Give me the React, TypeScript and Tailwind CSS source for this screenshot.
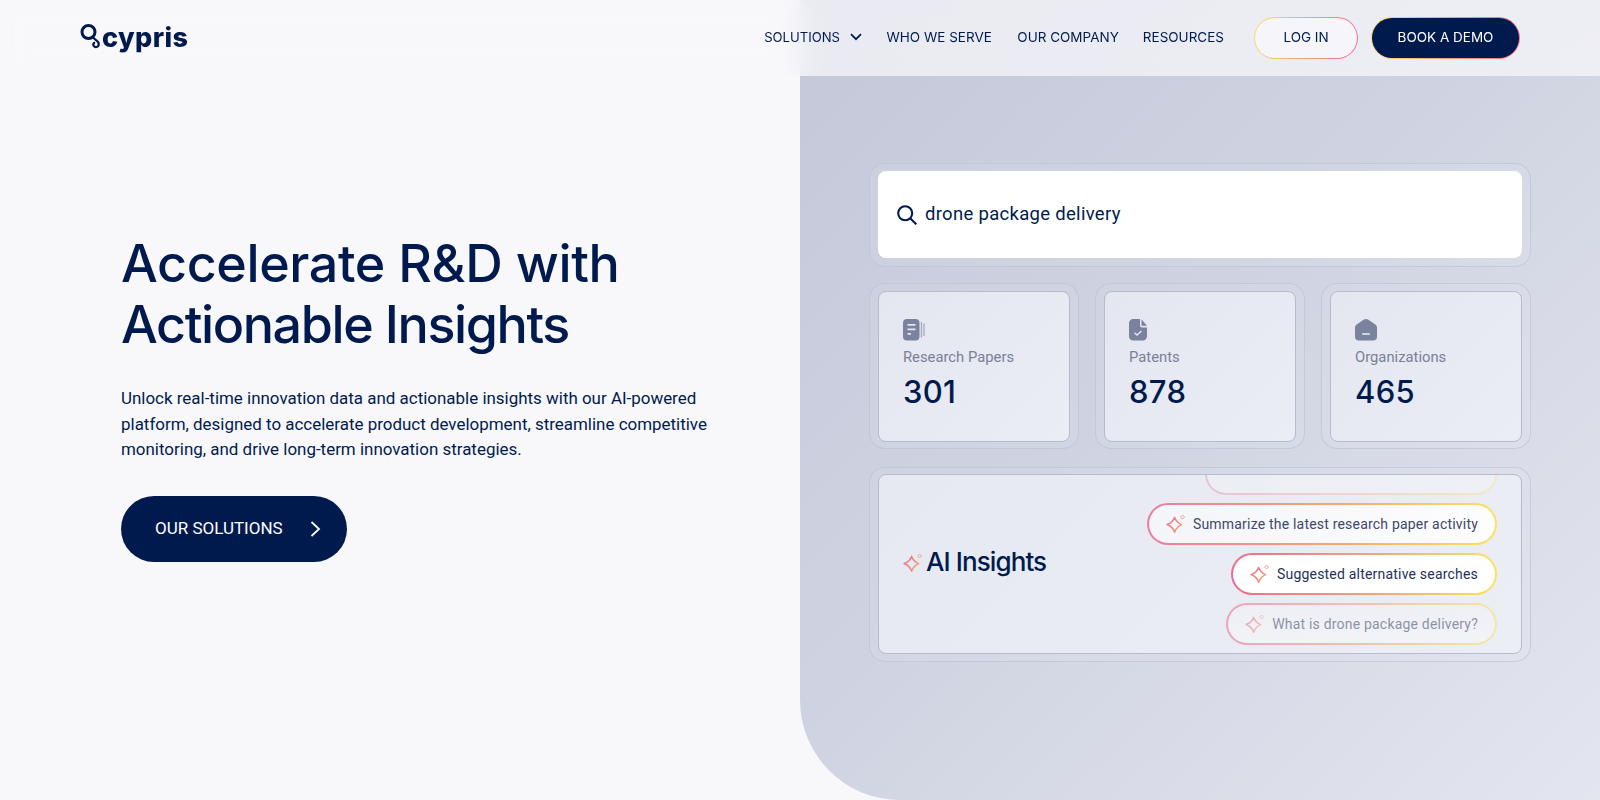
import React from "react";

const navy = "#001a4e";

function Sparkle({ id, className }: { id: string; className?: string }) {
  return (
    <svg viewBox="0 0 20 20" fill="none" className={className}>
      <defs>
        <linearGradient id={id} x1="0" y1="6" x2="16" y2="18" gradientUnits="userSpaceOnUse">
          <stop offset="0" stopColor="#ec6a90" />
          <stop offset="1" stopColor="#f6a971" />
        </linearGradient>
      </defs>
      <path
        d="M8.6 3.4C9.8 6.8 11.6 8.7 15.6 10.6C11.6 12.5 9.8 14.4 8.6 18.2C7.4 14.4 5.6 12.5 1.2 10.6C5.6 8.7 7.4 6.8 8.6 3.4Z"
        stroke={`url(#${id})`}
        strokeWidth="1.6"
        strokeLinejoin="round"
      />
      <path d="M16.6 1L18.6 3L16.6 5L14.6 3Z" stroke="#f3a0a0" strokeWidth="1" strokeLinejoin="round" />
    </svg>
  );
}

function Stat({ icon, label, value }: { icon: React.ReactNode; label: string; value: string }) {
  return (
    <div className="rounded-2xl border border-[#bcc1d2b0] bg-[#ffffff14] pb-[6px] pl-[8px] pr-[8px] pt-[7px]">
      <div className="flex h-[151px] flex-col rounded-lg border border-[#b6bbcd] bg-[linear-gradient(135deg,#e4e7f0,#ebedf5)] pl-[24px] pt-[27px]">
        <div className="h-[22px]">{icon}</div>
        <div className="mt-[6px] text-[14.8px] leading-[20px] text-[#7a8098] [font-family:Roboto,sans-serif]">{label}</div>
        <div className="mt-[6px] text-[31px] leading-[38px] font-medium tracking-[0.3px] text-[#001a4e] [font-family:Inter,sans-serif]">{value}</div>
      </div>
    </div>
  );
}

function Pill({ text, id, className, textClass }: { text: string; id: string; className: string; textClass: string }) {
  return (
    <div className={`flex h-[42px] shrink-0 items-center rounded-full border-2 border-transparent pl-[17px] pr-[17px] ${className}`}>
      <Sparkle id={id} className="h-[20px] w-[20px]" />
      <span className={`ml-[7px] text-[14px] leading-5 tracking-[0.2px] whitespace-nowrap [font-family:Roboto,sans-serif] ${textClass}`}>{text}</span>
    </div>
  );
}

export default function App() {
  return (
    <div className="relative flex h-[800px] w-[1600px] overflow-hidden bg-[#f8f8fb]" style={{ color: navy }}>
      <header className="absolute inset-x-0 top-0 z-10 flex h-[76px] items-center bg-[#f8f8fbb8] pl-[80px] pr-[80px] backdrop-blur-md">
        <div className="-mt-[2px] flex items-center">
          <svg viewBox="0 0 22 26" className="h-[26px] w-[22px]" fill="none" stroke={navy}>
            <circle cx="8.5" cy="8" r="6.5" strokeWidth="3" />
            <path d="M13 13.5L16.5 16.5C19.5 18.5 19.5 22.5 16.6 23C13.8 23.4 12.2 20.5 14.2 18.8" strokeWidth="2.2" strokeLinecap="round" />
          </svg>
          <span className="text-[27px] leading-none font-extrabold tracking-[0.4px] [font-family:Inter,sans-serif]">cypris</span>
        </div>
        <nav className="ml-auto flex items-center text-[13.5px] leading-5 [font-family:Inter,sans-serif]">
          <a className="-mt-[2px] flex items-center text-[13.1px]">
            SOLUTIONS
            <svg viewBox="0 0 12 8" className="ml-[10px] h-[8px] w-[12px]" fill="none" stroke={navy} strokeWidth="1.7">
              <path d="M1 1.2L6 6.2L11 1.2" />
            </svg>
          </a>
          <a className="-mt-[2px] ml-[24.5px]">WHO WE SERVE</a>
          <a className="-mt-[2px] ml-[25.5px]">OUR COMPANY</a>
          <a className="-mt-[2px] ml-[24px]">RESOURCES</a>
          <a className="ml-[30px] flex h-[42px] w-[104px] items-center justify-center rounded-full border border-transparent [background:linear-gradient(#f6f6fa,#f6f6fa)_padding-box,linear-gradient(100deg,#f9e06a,#f5a878_45%,#ee6a90)_border-box]">
            <span className="-mt-[2px]">LOG IN</span>
          </a>
          <a className="ml-[13px] flex h-[42px] w-[149px] items-center justify-center rounded-full border border-transparent text-white [background:linear-gradient(#001a4e,#001a4e)_padding-box,linear-gradient(100deg,#f9e06a,#f5a878_45%,#ee6a90)_border-box]">
            <span className="-mt-[2px]">BOOK A DEMO</span>
          </a>
        </nav>
      </header>

      <main className="flex w-[800px] flex-col pl-[121px] pt-[233px]">
        <h1 className="text-[52px] leading-[61px] font-medium tracking-[-0.4px] [font-family:Inter,sans-serif]">
          Accelerate R&amp;D with
          <br />
          <span className="tracking-[-1.4px]">Actionable Insights</span>
        </h1>
        <p className="mt-[31px] text-[16.95px] leading-[25.5px] [font-family:Roboto,sans-serif]">
          Unlock real-time innovation data and actionable insights with our AI-powered
          <br />
          platform, designed to accelerate product development, streamline competitive
          <br />
          monitoring, and drive long-term innovation strategies.
        </p>
        <a className="mt-[33px] flex h-[66px] w-[226px] items-center rounded-full bg-[#001a4e] pl-[34px] text-[17px] text-white [font-family:Roboto,sans-serif]">
          OUR SOLUTIONS
          <svg viewBox="0 0 11 16" className="ml-[27px] h-[16px] w-[11px]" fill="none" stroke="#fff" strokeWidth="1.8">
            <path d="M1.5 1L9 8L1.5 15" />
          </svg>
        </a>
      </main>

      <section className="w-[800px] rounded-bl-[100px] bg-[linear-gradient(135deg,#c3c8da,#cfd3e1_45%,#e3e6ef)] pl-[69px] pr-[69px] pt-[163px]">
        <div className="rounded-2xl border border-[#bcc1d2b0] bg-[#ffffff14] pb-[8px] pl-[8px] pr-[8px] pt-[7px]">
          <div className="flex h-[87px] items-center rounded-lg bg-white pl-[19px]">
            <svg viewBox="0 0 20 20" className="h-[20px] w-[20px]" fill="none" stroke={navy} strokeWidth="2.1">
              <circle cx="8.2" cy="8.2" r="7" />
              <path d="M13.2 13.2L19.3 19.3" />
            </svg>
            <span className="-mt-[2px] ml-[8px] text-[18.5px] leading-6 tracking-[0.3px] [font-family:Roboto,sans-serif]">drone package delivery</span>
          </div>
        </div>

        <div className="mt-[16px] grid grid-cols-3 gap-[16px]">
          <Stat
            label="Research Papers"
            value="301"
            icon={
              <svg viewBox="0 0 22 22" className="h-[22px] w-[22px]">
                <rect x="0" y="0" width="16.5" height="21.5" rx="4" fill="#7a829e" />
                <rect x="4.5" y="5" width="8" height="1.7" fill="#e6e9f1" />
                <rect x="4.5" y="9.5" width="8" height="1.7" fill="#e6e9f1" />
                <rect x="4.5" y="14" width="3.5" height="1.7" fill="#e6e9f1" />
                <rect x="17.8" y="3" width="1.3" height="15.5" fill="#a3a9bd" />
                <rect x="20.3" y="4.5" width="1.3" height="12.5" fill="#a3a9bd" />
              </svg>
            }
          />
          <Stat
            label="Patents"
            value="878"
            icon={
              <svg viewBox="0 0 22 22" className="h-[22px] w-[22px]">
                <path d="M4 0H11V6.5C11 7.6 11.9 8.5 13 8.5H18V17.5C18 19.7 16.2 21.5 14 21.5H4C1.8 21.5 0 19.7 0 17.5V4C0 1.8 1.8 0 4 0Z" fill="#7a829e" />
                <path d="M12.5 0.3L18 6.8H12.5Z" fill="#7a829e" />
                <path d="M5.5 13.8L8 16L12.5 12" fill="none" stroke="#e6e9f1" strokeWidth="1.4" />
              </svg>
            }
          />
          <Stat
            label="Organizations"
            value="465"
            icon={
              <svg viewBox="0 0 22 22" className="h-[22px] w-[22px]">
                <path d="M9 0.6C10.2 -0.2 11.8 -0.2 13 0.6L20 5.2C21.3 6 22 7.2 22 8.7V18C22 20 20.4 21.5 18.5 21.5H3.5C1.6 21.5 0 20 0 18V8.7C0 7.2 0.7 6 2 5.2Z" fill="#7a829e" />
                <rect x="7.2" y="14.2" width="7.6" height="1.6" fill="#e6e9f1" />
              </svg>
            }
          />
        </div>

        <div className="mt-[18px] rounded-2xl border border-[#bcc1d2b0] bg-[#ffffff14] pb-[7px] pl-[8px] pr-[8px] pt-[6px]">
          <div className="flex h-[180px] items-center justify-between overflow-hidden rounded-lg border border-[#b6bbcd] bg-[linear-gradient(135deg,#e6e9f1,#eceef5)] pl-[24px] pr-[24px]">
            <div className="mt-[-4px] flex items-center">
              <Sparkle id="spark-title" className="mt-[2px] h-[20px] w-[20px]" />
              <span className="ml-[3px] text-[26px] leading-8 font-medium tracking-[-0.9px] [font-family:Inter,sans-serif]">AI Insights</span>
            </div>
            <div className="flex h-full flex-col items-end justify-end gap-2 pb-[8px]">
              <div className="h-[42px] w-[292px] shrink-0 rounded-full border-2 border-transparent opacity-30 [background:linear-gradient(#f7f8fb,#f7f8fb)_padding-box,linear-gradient(90deg,#ec6a90,#f5a673_55%,#fbe35f)_border-box]" />
              <Pill id="spark-1" text="Summarize the latest research paper activity" className="[background:linear-gradient(100deg,#f4f5f9,#fdfdfe)_padding-box,linear-gradient(90deg,#ee7d9f,#f5a673_55%,#fbe35f)_border-box]" textClass="text-[#3e4868]" />
              <Pill id="spark-2" text="Suggested alternative searches" className="[background:linear-gradient(#fff,#fff)_padding-box,linear-gradient(90deg,#ec6a90,#f5a673_55%,#fbe35f)_border-box]" textClass="text-[#26315a]" />
              <Pill id="spark-3" text="What is drone package delivery?" className="opacity-55 [background:linear-gradient(#f2f3f8,#f8f9fb)_padding-box,linear-gradient(90deg,#ec6a90,#f5a673_55%,#fbe35f)_border-box]" textClass="text-[#3e4868]" />
            </div>
          </div>
        </div>
      </section>
    </div>
  );
}
